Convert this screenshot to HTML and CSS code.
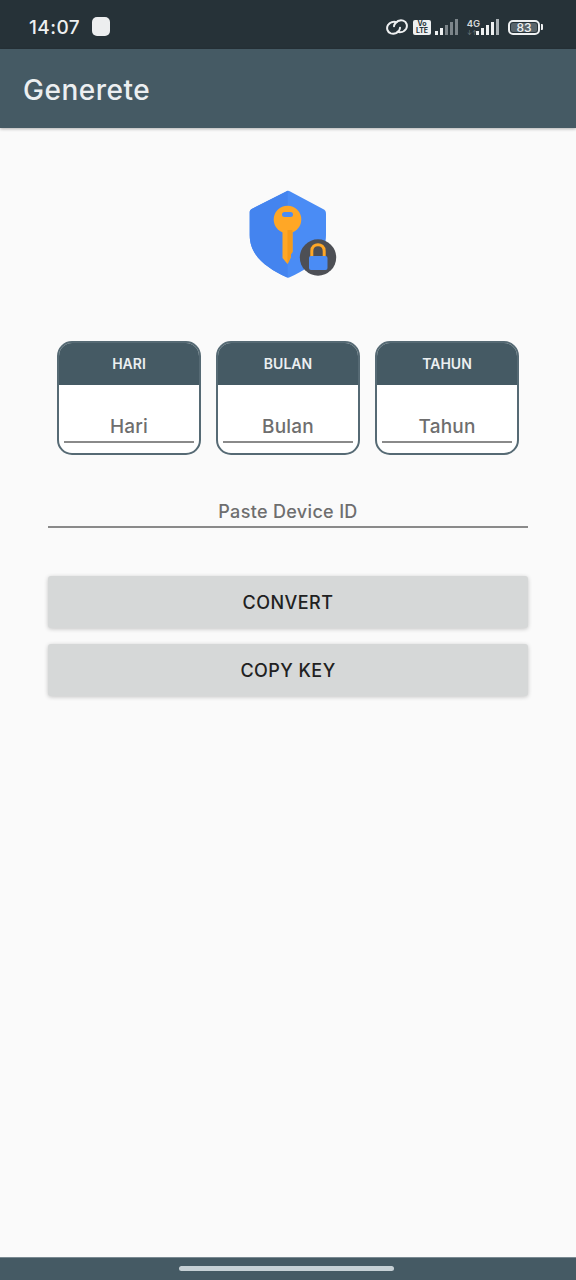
FILE: index.html
```html
<!DOCTYPE html>
<html lang="en">
<head>
<meta charset="utf-8">
<title>Generete</title>
<link rel="stylesheet" href="styles.css">
</head>
<body>
<div class="app">
  <div class="status">
    <span class="time">14:07</span>
    <span class="notif"></span>
    <span class="status-right">
      <svg class="link" width="22" height="16" viewBox="0 0 22 16" fill="none" stroke="#eef0f1" stroke-width="2" stroke-linecap="round"><path d="M10.5 3.2 C7.5 2.2 3.8 3.4 2 6 C0.2 9 1.2 13.2 4.8 14.4 C7.6 15.2 10.8 14.2 12.8 11.8 C13.6 10.8 14 9.8 14 8.8"/><path d="M8 7.2 C8 6 8.6 5 9.4 4.2 C11.4 1.8 14.4 0.8 17.2 1.6 C20.8 2.8 21.8 7 20 10 C18.2 12.6 14.6 13.8 11.6 12.8"/></svg>
      <span class="volte">Vo<br>LTE</span>
      <svg class="bars" width="25" height="16" viewBox="0 0 25 16"><rect x="0" y="12" width="3" height="4" fill="#eef0f1"/><rect x="5" y="9" width="3" height="7" fill="#eef0f1"/><rect x="10" y="6" width="3" height="10" fill="#7c858a"/><rect x="15" y="3" width="3" height="13" fill="#7c858a"/><rect x="20" y="0" width="3" height="16" fill="#7c858a"/></svg>
      <span class="net"><span class="net-4g">4G</span><span class="net-arrows">↓↑</span></span>
      <svg class="bars" width="24" height="16" viewBox="0 0 24 16"><rect x="0" y="12" width="3" height="4" fill="#eef0f1"/><rect x="5" y="9" width="3" height="7" fill="#eef0f1"/><rect x="10" y="6" width="3" height="10" fill="#eef0f1"/><rect x="15" y="3" width="3" height="13" fill="#eef0f1"/><rect x="20" y="0" width="3" height="16" fill="#aab1b5"/></svg>
      <span class="battery"><span class="battery-level">83</span></span><span class="battery-tip"></span>
    </span>
  </div>
  <header class="appbar">Generete</header>
  <main class="content">
    <div class="logo-wrap">
      <svg class="logo" width="90" height="90" viewBox="0 0 90 90">
        <path d="M39.7 1.2 C40.7 0.5 41.7 0.5 42.7 1.2 L76 19 C78 20 79 21 79 24 L79 45 C79 66 63 78 42.7 87.2 C41.7 87.8 40.7 87.8 39.7 87.2 C19.7 78 2.7 66 2.7 45 L2.7 22 C2.7 20.5 3.7 19.5 4.7 19 Z" fill="#4a8cf5"/>
        <path d="M39.7 1.2 C40.2 0.8 40.7 0.6 40.7 0.6 L40.7 87.6 C40.3 87.6 40 87.4 39.7 87.2 C19.7 78 2.7 66 2.7 45 L2.7 22 C2.7 20.5 3.7 19.5 4.7 19 Z" fill="#4484ef"/>
        <circle cx="40.5" cy="29.5" r="13.8" fill="#ffa726"/>
        <path d="M35.5 40 H45.5 V62 L44 64 V67 L40.5 74 L35.5 68 Z" fill="#ffa726"/>
        <path d="M40.5 40 H45.5 V62 L44 64 V67 L40.5 74 Z" fill="#f59a1b"/>
        <rect x="35" y="22" width="11" height="5" rx="2.5" fill="#4a8cf5"/>
        <circle cx="71" cy="67.5" r="18.2" fill="#4d4f55"/>
        <path d="M64.8 67 V61 C64.8 52.5 77.2 52.5 77.2 61 V67" fill="none" stroke="#ffa726" stroke-width="3"/>
        <rect x="62" y="66" width="18.5" height="14" rx="2" fill="#4a8cf5"/>
      </svg>
    </div>
    <div class="fields">
      <div class="card">
        <div class="card-head">HARI</div>
        <div class="card-body"><div class="card-input">Hari</div></div>
      </div>
      <div class="card">
        <div class="card-head">BULAN</div>
        <div class="card-body"><div class="card-input">Bulan</div></div>
      </div>
      <div class="card">
        <div class="card-head">TAHUN</div>
        <div class="card-body"><div class="card-input">Tahun</div></div>
      </div>
    </div>
    <div class="device">Paste Device ID</div>
    <button class="btn btn-convert">CONVERT</button>
    <button class="btn btn-copy">COPY KEY</button>
  </main>
  <footer class="navbar"><span class="home"></span></footer>
</div>
</body>
</html>
```

FILE: styles.css
```css
* { box-sizing: border-box; }
html, body { margin: 0; padding: 0; }
body { width: 576px; height: 1280px; overflow: hidden; background: #fafafa; font-family: Inter, "Liberation Sans", sans-serif; }
.app { display: flex; flex-direction: column; width: 576px; height: 1280px; }

.status { flex: 0 0 49px; display: flex; align-items: center; background: #263238; padding: 0 33px 0 29px; color: #eef0f1; }
.time { font-size: 19px; font-weight: 500; line-height: 24px; letter-spacing: .45px; margin-top: 6px; }
.notif { width: 18px; height: 19px; border-radius: 5px; background: #eceeef; margin-left: 12px; margin-top: 4px; }
.status-right { margin-left: auto; display: flex; align-items: center; margin-top: 5px; }
.link { display: block; margin-right: 5px; }
.volte { width: 18px; height: 15px; border-radius: 2px; background: #eef0f1; color: #263238; font-size: 7px; font-weight: 700; line-height: 7px; text-align: center; padding-top: 0; margin-right: 4px; }
.bars { display: block; }
.net { display: flex; flex-direction: column; align-items: center; width: 13px; margin: 0 -4px 0 7px; }
.net-4g { font-size: 9.5px; font-weight: 600; line-height: 10px; color: #d5d9db; }
.net-arrows { align-self: flex-start; font-size: 6px; line-height: 7px; color: #7c858a; }
.battery { display: flex; align-items: center; justify-content: center; width: 32px; height: 15px; border: 2px solid #eef0f1; border-radius: 5px; margin-left: 8px; padding: 1px; }
.battery-level { display: block; width: 100%; height: 100%; background: #59646a; border-radius: 2px; font-size: 12px; font-weight: 500; line-height: 9px; text-align: center; color: #eef0f1; }
.battery-tip { width: 2px; height: 6px; background: #eef0f1; margin-left: 1px; border-radius: 0 1px 1px 0; }

.appbar { flex: 0 0 79px; display: flex; align-items: center; padding: 3px 0 0 23px; background: #455a64; color: #eceff1; font-size: 28px; font-weight: 500; letter-spacing: .5px; box-shadow: 0 1px 3px rgba(0,0,0,.3); position: relative; }

.content { flex: 1; display: flex; flex-direction: column; padding: 0 48px; }
.logo-wrap { display: flex; justify-content: center; padding: 62px 0 0 8px; height: 213px; }
.logo { display: block; }

.fields { display: flex; justify-content: center; gap: 15px; }
.card { width: 144px; height: 114px; border: 2px solid #566a74; border-radius: 15px; overflow: hidden; background: #fff; }
.card-head { height: 42px; display: flex; align-items: center; justify-content: center; padding-bottom: 2px; background: #455a64; color: #eceff1; font-size: 14px; font-weight: 600; }
.card-body { padding: 0 5px; }
.card-input { height: 58px; padding-top: 30px; border-bottom: 2px solid #8a8a8a; color: #6e6e6e; font-size: 19px; font-weight: 500; letter-spacing: .2px; line-height: 24px; text-align: center; }

.device { margin-top: 44px; height: 29px; border-bottom: 2px solid #8a8a8a; color: #6e6e6e; font-size: 18px; font-weight: 500; letter-spacing: .33px; line-height: 25px; text-align: center; }

.btn { display: block; width: 100%; height: 52px; border: 0; border-radius: 3px; background: #d6d8d8; color: #212121; font-family: inherit; font-size: 18px; font-weight: 500; letter-spacing: .45px; box-shadow: 0 1px 4px rgba(0,0,0,.22); }
.btn-convert { margin-top: 48px; }
.btn-copy { margin-top: 16px; }

.navbar { flex: 0 0 23px; display: flex; justify-content: center; padding-top: 8px; background: #455a64; border-top: 1px solid #7a8a92; }
.home { width: 215px; height: 5px; margin-left: -3px; border-radius: 3px; background: #c6d0d5; }
```
